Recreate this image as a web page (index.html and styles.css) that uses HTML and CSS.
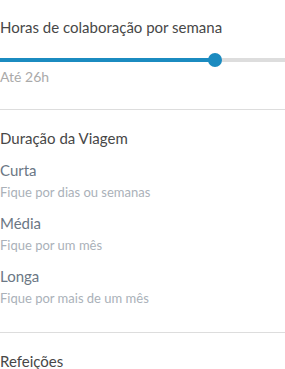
FILE: index.html
```html
<!DOCTYPE html>
<html lang="pt">
<head>
    <meta charset="UTF-8">
    <title>Filtros</title>
    <link rel="stylesheet" href="styles.css">
</head>
<body>
    <div class="filters">
        <!-- Horas por semana -->
        <section class="filter-group">
            <h3 class="filter-title">Horas de colaboração por semana</h3>
            <div class="range">
                <div class="range-fill" style="width: 215px;"></div>
                <span class="range-thumb" style="left: 215px;"></span>
            </div>
            <p class="range-value">Até 26h</p>
        </section>

        <!-- Duração -->
        <section class="filter-group filter-group--list">
            <h3 class="filter-title">Duração da Viagem</h3>
            <div class="option">
                <div class="option-label">Curta</div>
                <div class="option-desc">Fique por dias ou semanas</div>
            </div>
            <div class="option">
                <div class="option-label">Média</div>
                <div class="option-desc">Fique por um mês</div>
            </div>
            <div class="option">
                <div class="option-label">Longa</div>
                <div class="option-desc">Fique por mais de um mês</div>
            </div>
        </section>

        <!-- Refeições -->
        <section class="filter-group">
            <h3 class="filter-title">Refeições</h3>
        </section>
    </div>
</body>
</html>
```

FILE: styles.css
```css
body {
    margin: 0;
    font-family: Lato, "Noto Sans", sans-serif;
    background: #fff;
}

.filters {
    display: flex;
    flex-direction: column;
}

.filter-group {
    padding: 18px 0 22px;
    border-bottom: 1px solid #dddddd;
}

.filter-group:first-child {
    padding-top: 17px;
}

.filter-group--list {
    padding-bottom: 26px;
}

.filter-title {
    margin: 0;
    font-size: 15px;
    font-weight: normal;
    line-height: 20px;
    color: #474747;
}

.range {
    position: relative;
    height: 14px;
    margin-top: 16px;
    display: flex;
    align-items: center;
    background: linear-gradient(#dddddd, #dddddd) center / 100% 4px no-repeat;
}

.range-fill {
    height: 4px;
    background: #1b8bc0;
}

.range-thumb {
    position: absolute;
    top: 0;
    width: 14px;
    height: 14px;
    margin-left: -7px;
    border-radius: 50%;
    background: #1b8bc0;
}

.range-value {
    margin: 0;
    font-size: 14px;
    line-height: 20px;
    color: #aaaaaa;
}

.option {
    margin-top: 12px;
    display: flex;
    flex-direction: column;
    gap: 4px;
}

.option + .option {
    margin-top: 13px;
}

.option-label {
    font-size: 15px;
    line-height: 20px;
    color: #6b7785;
}

.option-desc {
    font-size: 13px;
    line-height: 16px;
    color: #aab1b9;
}
```
